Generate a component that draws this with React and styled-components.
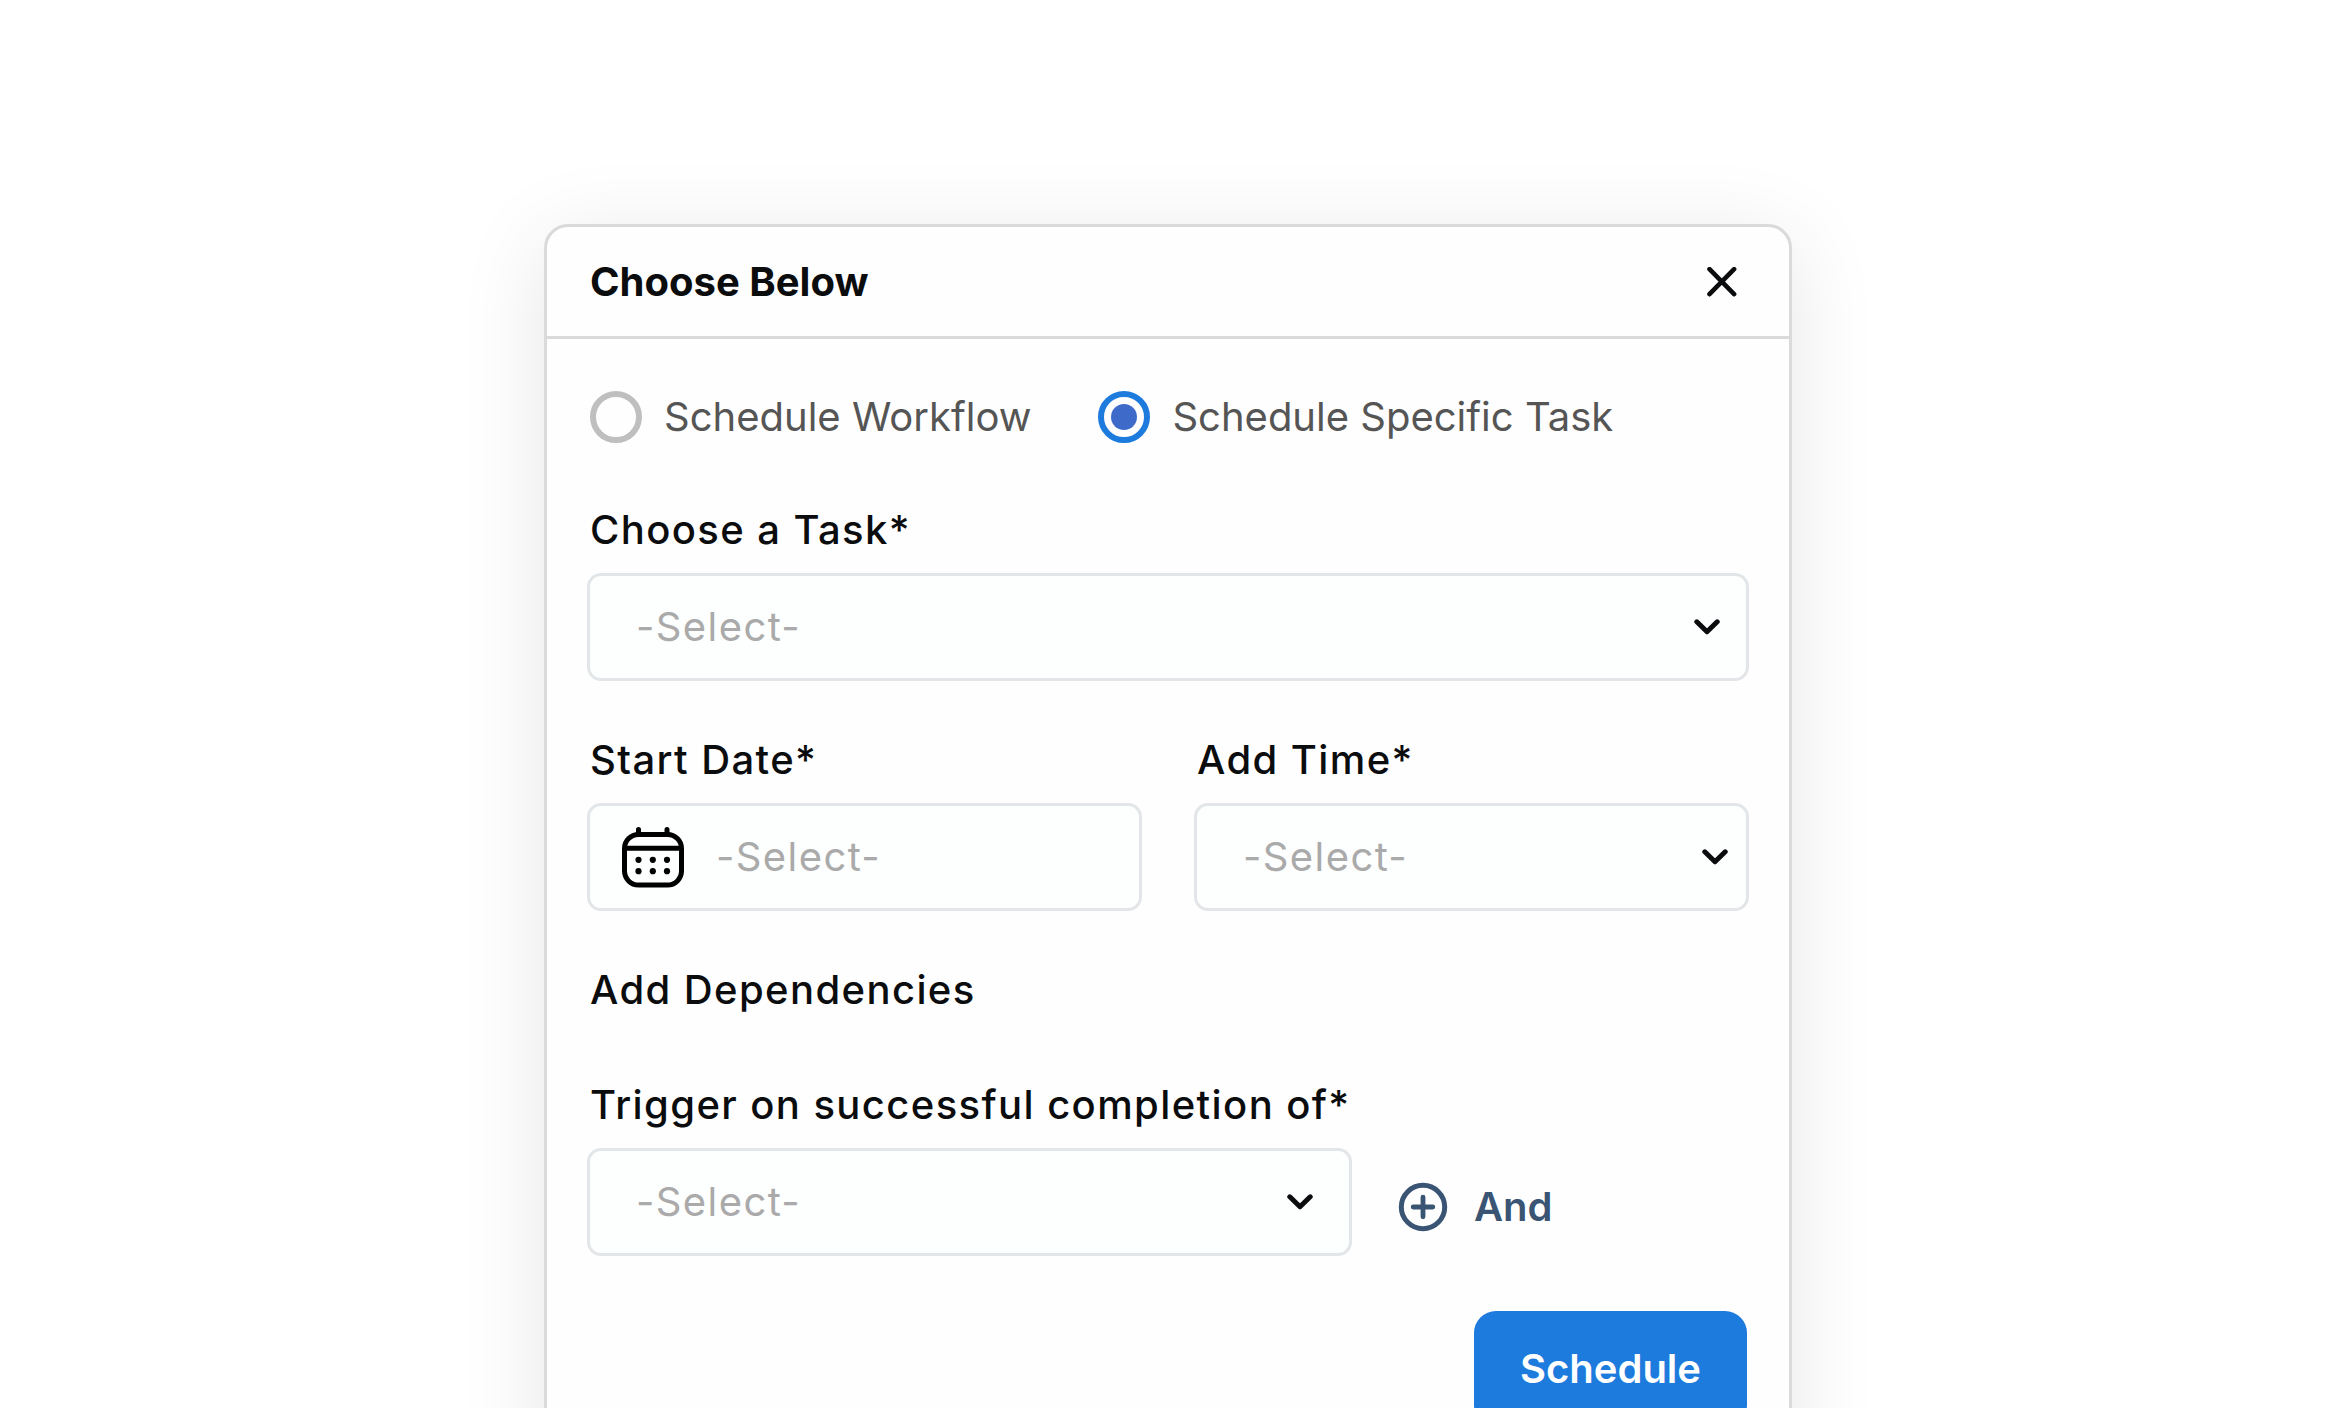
import { useState } from 'react';
import styled, { createGlobalStyle } from 'styled-components';

const GlobalStyle = createGlobalStyle`
  *,
  *::before,
  *::after {
    box-sizing: border-box;
  }
  body {
    margin: 0;
    background: #fff;
    font-family: Inter, 'Liberation Sans', sans-serif;
    font-size: 40px;
    line-height: 48px;
    color: #0b0c0e;
  }
  button,
  input,
  select {
    font: inherit;
    color: inherit;
  }
`;

const Page = styled.main`
  display: flex;
  justify-content: center;
  align-items: flex-start;
  height: 100vh;
  padding: 224px 24px 0;
  overflow: hidden;
`;

const Dialog = styled.form`
  width: 100%;
  max-width: 1248px;
  background: #fefefe;
  border: 3px solid #dadada;
  border-radius: 24px;
  box-shadow: 0 16px 88px rgba(0, 0, 0, 0.1);
`;

const Header = styled.header`
  display: flex;
  align-items: center;
  justify-content: space-between;
  height: 112px;
  padding: 0 48px 0 43px;
  border-bottom: 3px solid #dadada;
`;

const Title = styled.h1`
  margin: 0;
  font-size: 40px;
  font-weight: 700;
`;

const IconButton = styled.button`
  display: flex;
  padding: 4px;
  border: 0;
  background: none;
  cursor: pointer;
`;

const Body = styled.div`
  display: flex;
  flex-direction: column;
  gap: 55px;
  padding: 52px 40px;
`;

const RadioGroup = styled.div`
  display: flex;
  gap: 67px;
  padding: 0 3px 8px;
`;

const RadioLabel = styled.label`
  display: flex;
  align-items: center;
  gap: 22px;
  color: #555;
  cursor: pointer;
`;

const Radio = styled.input`
  appearance: none;
  display: grid;
  place-items: center;
  width: 52px;
  height: 52px;
  margin: 0;
  border: 6px solid #bfbfbf;
  border-radius: 50%;

  &:checked {
    border-color: #1e7bde;
  }
  &:checked::before {
    content: '';
    width: 26px;
    height: 26px;
    border-radius: 50%;
    background: #3e6bc9;
  }
`;

const Field = styled.div`
  display: flex;
  flex-direction: column;
  gap: 19px;
`;

const Label = styled.label`
  padding-left: 3px;
  font-weight: 500;
  letter-spacing: 0.035em;
`;

const SectionTitle = styled.h2`
  margin: 0 0 12px;
  padding-left: 3px;
  font-size: 40px;
  font-weight: 500;
  letter-spacing: 0.035em;
`;

const Columns = styled.div`
  display: grid;
  grid-template-columns: 1fr 1fr;
  gap: 52px;
`;

const Control = styled.div`
  display: grid;
  align-items: center;
  height: 108px;
  border: 3px solid #e3e6e8;
  border-radius: 14px;
  background: #fdfefe;
`;

const NativeSelect = styled.select`
  grid-area: 1 / 1;
  appearance: none;
  width: 100%;
  height: 100%;
  padding: 0 80px 0 46px;
  border: 0;
  background: none;
  color: #aaa;
  letter-spacing: 0.035em;
  outline: none;
`;

const Chevron = styled.svg`
  grid-area: 1 / 1;
  justify-self: end;
  margin-right: ${({ $inset }) => $inset}px;
  pointer-events: none;
`;

const DateControl = styled(Control)`
  grid-template-columns: auto 1fr;
  gap: 32px;
  padding-left: 32px;
`;

const DateInput = styled.input`
  width: 100%;
  padding: 0;
  border: 0;
  background: none;
  letter-spacing: 0.035em;
  outline: none;

  &::placeholder {
    color: #aaa;
    opacity: 1;
  }
`;

const DependencyRow = styled.div`
  display: flex;
  align-items: flex-end;
  gap: 46px;

  ${Field} {
    flex: 0 1 765px;
  }
`;

const AndButton = styled.button`
  display: flex;
  align-items: center;
  gap: 26px;
  padding: 0 0 24px;
  border: 0;
  background: none;
  color: #3a5474;
  font-weight: 600;
  cursor: pointer;
`;

const Footer = styled.footer`
  display: flex;
  justify-content: flex-end;
  padding-right: 2px;
`;

const SubmitButton = styled.button`
  height: 116px;
  padding: 0 46px;
  border: 0;
  border-radius: 22px;
  background: #1e7bde;
  color: #fff;
  font-weight: 600;
  cursor: pointer;
`;

const CloseIcon = () => (
  <svg width="30" height="30" viewBox="0 0 30 30" fill="none" aria-hidden="true">
    <path
      d="M2.5 2.2l24.6 25M27.1 2.2l-24.6 25"
      stroke="#0b0c0e"
      strokeWidth="4.6"
      strokeLinecap="round"
    />
  </svg>
);

const CalendarIcon = () => (
  <svg width="62" height="62" viewBox="0 0 62 62" fill="none" aria-hidden="true">
    <path
      d="M16.5 3.5v5M45 3.5v5"
      stroke="#000"
      strokeWidth="5"
      strokeLinecap="round"
    />
    <rect
      x="2.5"
      y="8.5"
      width="57"
      height="50.5"
      rx="14"
      stroke="#000"
      strokeWidth="5"
    />
    <path d="M2.5 22.3h57" stroke="#000" strokeWidth="5" />
    {[33.8, 45.2].map(y =>
      [16.5, 30.8, 45].map(x => (
        <circle key={`${x}-${y}`} cx={x} cy={y} r="3.1" fill="#000" />
      ))
    )}
  </svg>
);

const PlusIcon = () => (
  <svg width="50" height="50" viewBox="0 0 50 50" fill="none" aria-hidden="true">
    <circle cx="25" cy="25" r="21.7" stroke="currentColor" strokeWidth="5" />
    <path
      d="M25 15.2v19.6M15.2 25h19.6"
      stroke="currentColor"
      strokeWidth="4.8"
      strokeLinecap="round"
    />
  </svg>
);

const Select = ({ id, inset }) => (
  <Control>
    <NativeSelect id={id} defaultValue="">
      <option value="">-Select-</option>
    </NativeSelect>
    <Chevron
      $inset={inset}
      width="26"
      height="16"
      viewBox="0 0 26 16"
      fill="none"
      aria-hidden="true"
    >
      <path
        d="M2.8 2.8l10.2 9.9L23.2 2.8"
        stroke="#0b0c0e"
        strokeWidth="5"
        strokeLinecap="round"
        strokeLinejoin="round"
      />
    </Chevron>
  </Control>
);

const App = () => {
  const [mode, setMode] = useState('task');

  return (
    <>
      <GlobalStyle />
      <Page>
        <Dialog onSubmit={e => e.preventDefault()}>
          <Header>
            <Title>Choose Below</Title>
            <IconButton type="button" aria-label="Close">
              <CloseIcon />
            </IconButton>
          </Header>
          <Body>
            <RadioGroup>
              <RadioLabel>
                <Radio
                  type="radio"
                  name="mode"
                  checked={mode === 'workflow'}
                  onChange={() => setMode('workflow')}
                />
                Schedule Workflow
              </RadioLabel>
              <RadioLabel>
                <Radio
                  type="radio"
                  name="mode"
                  checked={mode === 'task'}
                  onChange={() => setMode('task')}
                />
                Schedule Specific Task
              </RadioLabel>
            </RadioGroup>

            <Field>
              <Label htmlFor="task">Choose a Task*</Label>
              <Select id="task" inset={26} />
            </Field>

            <Columns>
              <Field>
                <Label htmlFor="date">Start Date*</Label>
                <DateControl>
                  <CalendarIcon />
                  <DateInput id="date" type="text" placeholder="-Select-" />
                </DateControl>
              </Field>
              <Field>
                <Label htmlFor="time">Add Time*</Label>
                <Select id="time" inset={18} />
              </Field>
            </Columns>

            <SectionTitle>Add Dependencies</SectionTitle>

            <DependencyRow>
              <Field>
                <Label htmlFor="trigger">
                  Trigger on successful completion of*
                </Label>
                <Select id="trigger" inset={36} />
              </Field>
              <AndButton type="button">
                <PlusIcon />
                And
              </AndButton>
            </DependencyRow>

            <Footer>
              <SubmitButton type="submit">Schedule</SubmitButton>
            </Footer>
          </Body>
        </Dialog>
      </Page>
    </>
  );
};

export default App;
